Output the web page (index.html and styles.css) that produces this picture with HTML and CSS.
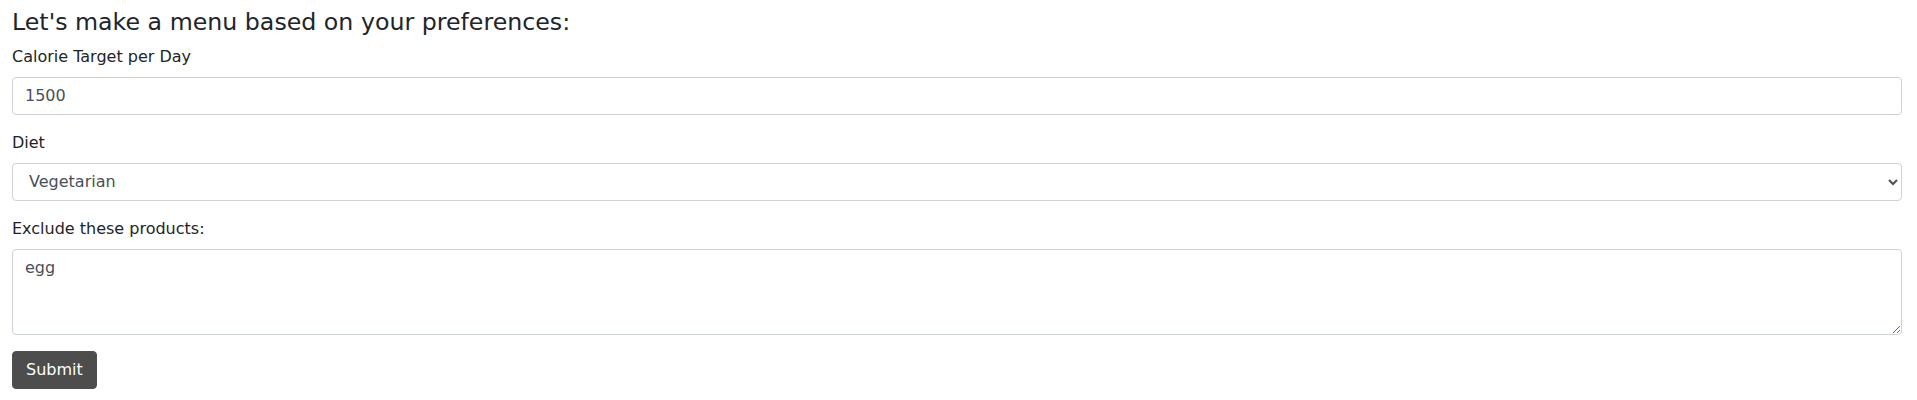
FILE: index.html
```html
<!DOCTYPE html>
<html lang="en">
<head>
<meta charset="utf-8">
<title>Menu preferences</title>
<link rel="stylesheet" href="styles.css">
</head>
<body>
<div class="container">
  <h4 class="title">Let's make a menu based on your preferences:</h4>
  <form class="menu-form">
    <div class="form-group">
      <label class="form-label" for="calories">Calorie Target per Day</label>
      <input class="form-control" id="calories" type="text" value="1500">
    </div>
    <div class="form-group">
      <label class="form-label" for="diet">Diet</label>
      <select class="form-control form-select" id="diet">
        <option selected>Vegetarian</option>
        <option>Vegan</option>
        <option>Paleo</option>
      </select>
    </div>
    <div class="form-group">
      <label class="form-label" for="exclude">Exclude these products:</label>
      <textarea class="form-control form-textarea" id="exclude" rows="3">egg</textarea>
    </div>
    <button class="btn" type="submit">Submit</button>
  </form>
</div>
</body>
</html>
```
FILE: styles.css
```css
* { box-sizing: border-box; }
html, body { margin: 0; padding: 0; background: #fff; }
body {
  font-family: "DejaVu Sans", "Open Sans", sans-serif;
  font-size: 16px;
  line-height: 1.5;
  color: #212529;
}
.container {
  padding: 8px 15px 0 12px;
}
.title {
  margin: 0 0 8px;
  font-size: 23.7px;
  font-weight: 400;
  line-height: 28.8px;
  color: #212529;
}
.menu-form { margin: 0; }
.form-group { margin-bottom: 16px; }
.form-label {
  display: inline-block;
  margin-bottom: 8px;
}
.form-control {
  display: block;
  width: 100%;
  height: 38px;
  padding: 6px 12px;
  font-family: inherit;
  font-size: 16px;
  line-height: 1.5;
  color: #495057;
  background: #fff;
  border: 1px solid #ced4da;
  border-radius: 4px;
  margin: 0;
}
.form-select { padding-right: 8px; }
.form-textarea {
  height: 86px;
  resize: vertical;
}
.btn {
  display: inline-block;
  font-family: inherit;
  font-size: 16px;
  line-height: 1.5;
  padding: 6px 13px;
  color: #fff;
  background: #4d4d4d;
  border: 1px solid #4d4d4d;
  border-radius: 4px;
  cursor: pointer;
}
```
